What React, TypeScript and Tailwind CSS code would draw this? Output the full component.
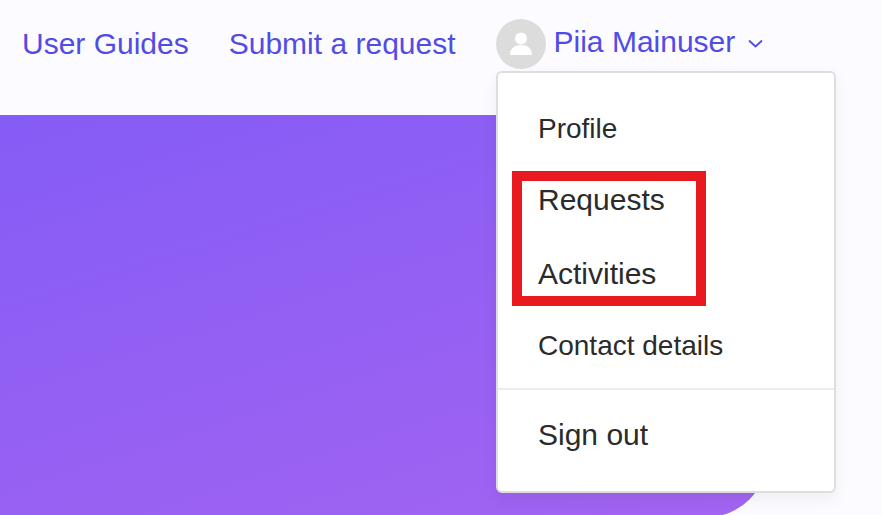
import React from "react";

function MenuItem({ label, className }: { label: string; className: string }) {
  return <div className={"pl-[40px] leading-[36px] text-[#2b2b2b] " + className}>{label}</div>;
}

export default function App() {
  return (
    <div className="relative w-[882px] h-[515px] overflow-hidden bg-[#fcfbff] font-['Liberation_Sans',Arial,sans-serif]">
      <header className="h-[115px] flex items-start pl-[22px] text-[#524ce6] text-[30px] leading-[36px]">
        <a className="mt-[26px]">User Guides</a>
        <a className="mt-[26px] ml-[40px]">Submit a request</a>
        <div className="mt-[19px] ml-[40px] flex items-start">
          <div className="w-[50px] h-[50px] rounded-full bg-[#dcdcdc] flex items-center justify-center">
            <svg width="30" height="30" viewBox="0 0 30 30" fill="#ffffff">
              <circle cx="15" cy="9.500" r="6" />
              <path d="M4 26c0-6 4-10 11-10s11 4 11 10z" />
            </svg>
          </div>
          <span className="ml-[8px] mt-[5px]">Piia Mainuser</span>
          <svg className="ml-[13px] mt-[20px]" width="15" height="10" viewBox="0 0 15 10" fill="none" stroke="#524ce6" strokeWidth="1.800" strokeLinecap="round" strokeLinejoin="round">
            <path d="M1.500 2l6 5.500 6-5.500" />
          </svg>
        </div>
      </header>
      <div className="w-[767px] h-[402px] rounded-br-[60px] bg-[linear-gradient(162deg,#855cf6,#a364f1)]" />
      <div className="absolute left-[496px] top-[71px] w-[340px] h-[422px] bg-white border-2 border-[#dedede] rounded-[6px] shadow-[0_6px_16px_rgba(0,0,0,0.06)]">
        <MenuItem label="Profile" className="mt-[38px] text-[28px]" />
        <MenuItem label="Requests" className="mt-[35px] text-[30px]" />
        <MenuItem label="Activities" className="mt-[38px] text-[30px]" />
        <MenuItem label="Contact details" className="mt-[36px] text-[28px]" />
        <div className="mt-[24px] h-[2px] bg-[#ececec]" />
        <MenuItem label="Sign out" className="mt-[27px] text-[30px]" />
      </div>
      <div className="absolute left-[512px] top-[171px] w-[194px] h-[135px] border-[10px] border-[#e8191f]" />
    </div>
  );
}
